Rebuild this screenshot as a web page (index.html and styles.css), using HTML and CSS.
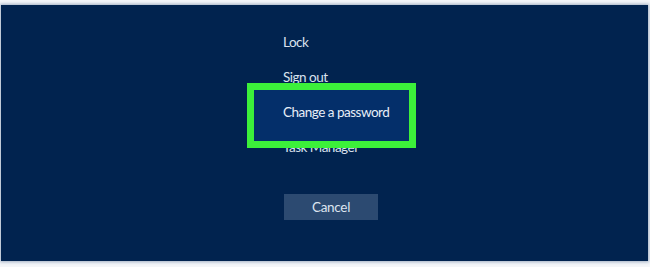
FILE: index.html
```html
<!DOCTYPE html>
<html>
<head>
<meta charset="utf-8">
<link rel="stylesheet" href="styles.css">
</head>
<body>
<div class="screen">
  <ul class="menu">
    <li class="item">Lock</li>
    <li class="item">Sign out</li>
    <li class="item selected"><span class="label">Change a password</span></li>
    <li class="item">Task Manager</li>
  </ul>
  <button class="cancel">Cancel</button>
</div>
</body>
</html>
```
FILE: styles.css
```css
html, body {
  margin: 0;
  padding: 0;
  background: #f4f6f9;
}
body {
  width: 650px;
  height: 267px;
  overflow: hidden;
}
.screen {
  margin: 5px 2px 0 1px;
  height: 256px;
  background: #01234f;
  box-shadow: 0 0 3px 1px rgba(60, 90, 130, 0.45);
  padding: 0 0 0 282px;
  box-sizing: border-box;
  display: flex;
  flex-direction: column;
  align-items: flex-start;
  font-family: "Lato", "Open Sans", sans-serif;
  color: #d9e1ee;
}
.menu {
  list-style: none;
  margin: 0;
  padding: 20px 0 0 0;
}
.item {
  height: 35px;
  line-height: 35px;
  font-size: 13.5px;
  letter-spacing: -0.5px;
  position: relative;
}
.selected {
  z-index: 2;
  color: #e8eef8;
}
.selected::before {
  content: "";
  position: absolute;
  left: -36px;
  top: -12px;
  width: 169px;
  height: 65px;
  box-sizing: border-box;
  border: 7px solid #3cf03a;
  background: #042f6a;
}
.selected .label {
  position: relative;
}
.cancel {
  margin-top: 29px;
  margin-left: 1px;
  width: 94px;
  height: 26px;
  border: none;
  background: #2c4a71;
  color: #dce4ef;
  font-family: "Lato", "Open Sans", sans-serif;
  font-size: 13.5px;
  letter-spacing: -0.3px;
  padding: 0;
}
```
